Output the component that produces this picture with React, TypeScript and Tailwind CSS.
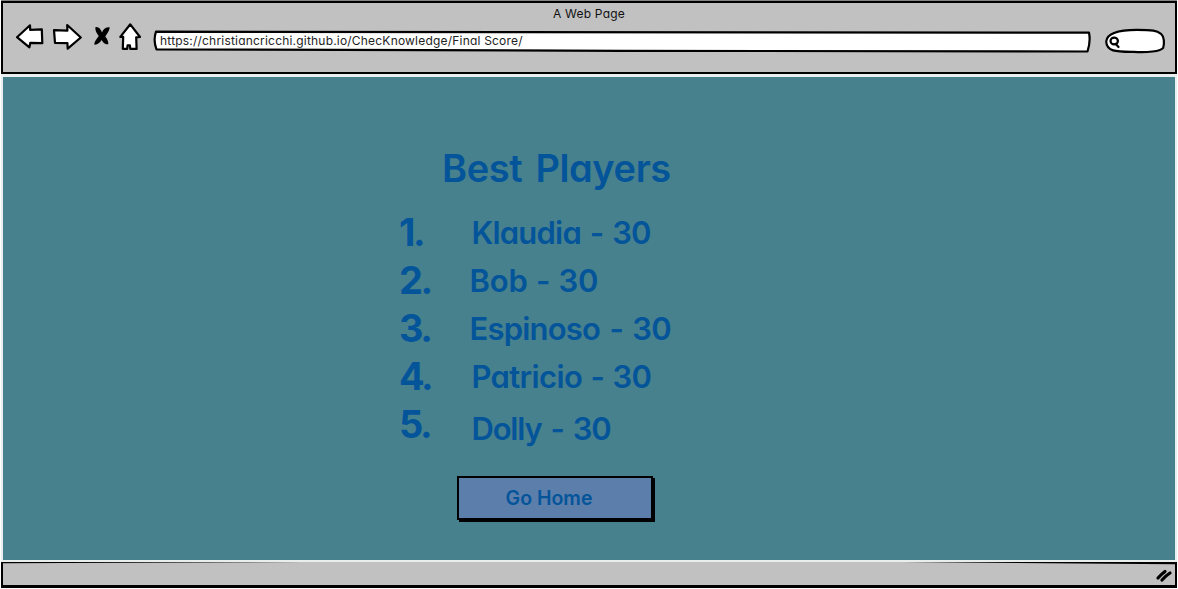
import React from "react";

const players = [
  { rank: "1.", label: "Klaudia - 30", cls: "pl-[85.5px] pt-[1px] tracking-[-0.8px] [word-spacing:1.8px]" },
  { rank: "2.", label: "Bob - 30", cls: "pl-[83.5px] pt-[1px] tracking-[-0.1px] [word-spacing:0.4px]" },
  { rank: "3.", label: "Espinoso - 30", cls: "pl-[83.5px] pt-[1px] tracking-[-0.8px] [word-spacing:2.3px]" },
  { rank: "4.", label: "Patricio - 30", cls: "pl-[85.5px] pt-[1px] tracking-[-0.65px] [word-spacing:1.1px]" },
  { rank: "5.", label: "Dolly - 30", cls: "pl-[85.5px] pt-[5px] tracking-[-1.2px] [word-spacing:2.4px]" },
];

function NavIcons() {
  return (
    <svg className="mt-[17px] ml-[12px] h-[34px] w-[130px] shrink-0" viewBox="0 0 130 34" fill="#fff" stroke="#000" strokeWidth="2.2" strokeLinejoin="round" strokeLinecap="round">
      <path d="M15 5.300 2 17.200l12.400 10.200.9-4.600 12 .4-.5-13.800-11.600.5Z" />
      <path d="m39 10.200 13.400.4-.2-5.600 13.600 12.500-13.100 11.200-.3-5.600-12.400-.2Z" />
      <path d="M80.400 7.200C84 6.500 86 10 87 12.400 88.500 9 91 6.500 94.800 7.600 94 12 91.500 14.500 90.300 16.400 92.500 19 93.500 22 93.300 24.300 89.500 24.500 88 22 86.600 20 84.500 23 82.500 25 79.200 24.600 79.500 21 82 18.500 83.700 16 81.500 13 80 10.500 80.400 7.200Z" fill="#000" stroke="none" />
      <path d="m115.300 4.300-10 12.600h2.900l-.4 12h4.400l.4-3.500 2.300-.1.400 3.600h6.300l-.4-11.600 3.800-.3Z" />
    </svg>
  );
}

function SearchBox() {
  return (
    <svg className="mt-[24px] ml-[13px] h-[28px] w-[62px] shrink-0" viewBox="0 0 62 28" fill="#fff" stroke="#000" strokeWidth="2.2" strokeLinecap="round">
      <path d="M2.200 14.500C2.800 6.600 14 2.800 33 2.800c15.500 0 20 1 24 4 3.300 3 3.500 9.500 2.200 14C56.500 24.400 43 25.700 30 24.900 13 24.600 2.600 25 2.200 14.500Z" />
      <ellipse cx="10.200" cy="14" rx="3.700" ry="3.300" />
      <path d="m11.500 16.800 3 3.200" />
    </svg>
  );
}

function AddressBar() {
  return (
    <div className="mt-[27px] ml-[7px] grid h-[24px] w-[939px] shrink-0">
      <svg className="col-start-1 row-start-1 h-[24px] w-[939px]" viewBox="0 0 939 24" fill="#fff" stroke="#000" strokeWidth="2.2" strokeLinejoin="round">
        <path d="M4 1.700 937 2.700C938.500 10 937 17 935.500 21.500L470 20.800 4.500 19.400C2 13 2.500 6 4 1.700Z" />
      </svg>
      <span className="col-start-1 row-start-1 pt-[1px] pl-[8px] text-[12px] leading-[20px] whitespace-pre text-[#222] tracking-[0.2px]">
        https://christiancricchi.github.io/ChecKnowledge/Final Score/
      </span>
    </div>
  );
}

export default function App() {
  return (
    <div className="flex h-[589px] w-[1178px] flex-col overflow-hidden bg-white pr-px pl-px font-['Inter','Liberation_Sans',sans-serif] [font-feature-settings:'cv11']">
      <div className="h-px shrink-0 bg-[#858585]" />
      <header className="flex h-[73px] shrink-0 flex-col border-2 border-black bg-[#c1c1c1]">
        <div className="h-0 text-center text-[12px] leading-[22px] text-[#111] tracking-[0.2px]">A Web Page</div>
        <div className="flex h-[69px] items-start">
          <NavIcons />
          <AddressBar />
          <SearchBox />
        </div>
      </header>
      <main className="flex h-[488px] shrink-0 flex-col items-start border-x-2 border-t-[3px] border-b-2 border-[#e9eeee] bg-[#47818e] text-[#04549a]">
        <h1 className="mt-[67px] ml-[439px] text-[38px] leading-[48px] font-semibold tracking-[-0.4px] whitespace-pre [word-spacing:4px]">Best Players</h1>
        <ol className="mt-[16px] ml-[396px]">
          {players.map((p) => (
            <li key={p.rank} className="flex h-[48px] items-start whitespace-pre">
              <span className="w-0 text-[38px] leading-[48px] font-bold tracking-[-2.5px]">{p.rank}</span>
              <span className={`-ml-[13px] text-[31px] leading-[48px] font-semibold ${p.cls}`}>{p.label}</span>
            </li>
          ))}
        </ol>
        <button className="mt-[28px] ml-[454px] flex h-[44px] w-[196px] items-center justify-center border-2 border-black bg-[#5b7eab] pt-px pr-[12px] text-[19.5px] font-semibold shadow-[2px_2px_0_#000]">
          Go Home
        </button>
      </main>
      <footer className="flex h-[26px] shrink-0 items-start justify-end border-x-2 border-b-[3px] border-black bg-[#c1c1c1]">
        <svg className="h-[23px] w-[1172px]" viewBox="0 0 1172 23" stroke="#000" strokeLinecap="round">
          <path d="M0 0H300L0 1.200ZM1172 0H900l272 2.200Z" stroke="none" />
          <path d="M1155 16Q1158 12.500 1162 9.500M1159 18Q1163 13.500 1167 11" fill="none" strokeWidth="3.200" />
        </svg>
      </footer>
    </div>
  );
}
